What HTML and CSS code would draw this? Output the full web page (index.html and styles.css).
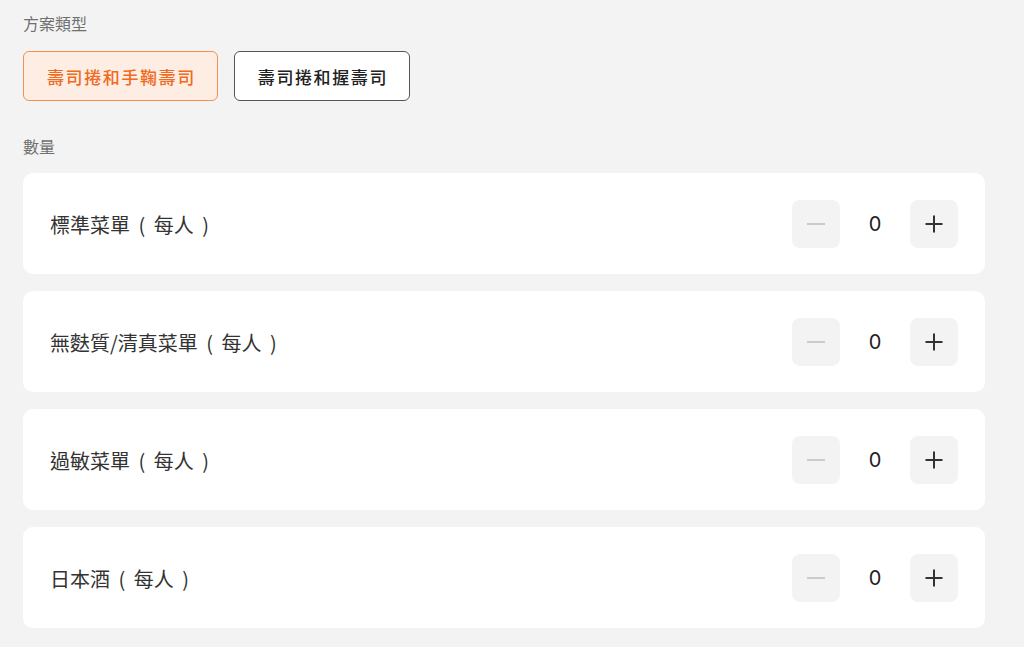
FILE: index.html
```html
<!DOCTYPE html>
<html>
  <head>
    <meta charset="utf-8">
    <title>方案</title>
    <link rel="stylesheet" href="styles.css">
  </head>
  <body>
    <section class="field">
      <p class="field-label">方案類型</p>
      <div class="plan-options">
        <button type="button" class="plan active">壽司捲和手鞠壽司</button>
        <button type="button" class="plan">壽司捲和握壽司</button>
      </div>
    </section>

    <section class="field">
      <p class="field-label qty-label">數量</p>
      <div class="qty-list">
        <div class="qty-row">
          <span class="qty-name">標準菜單 ( 每人 )</span>
          <div class="stepper">
            <button type="button" class="step minus" disabled>
              <svg viewBox="0 0 18 18" width="18" height="18"><path d="M0 9h18"/></svg>
            </button>
            <span class="count">0</span>
            <button type="button" class="step plus">
              <svg viewBox="0 0 18 18" width="18" height="18"><path d="M0.5 9h17M9 0.5v17"/></svg>
            </button>
          </div>
        </div>
        <div class="qty-row">
          <span class="qty-name">無麩質/清真菜單 ( 每人 )</span>
          <div class="stepper">
            <button type="button" class="step minus" disabled>
              <svg viewBox="0 0 18 18" width="18" height="18"><path d="M0 9h18"/></svg>
            </button>
            <span class="count">0</span>
            <button type="button" class="step plus">
              <svg viewBox="0 0 18 18" width="18" height="18"><path d="M0.5 9h17M9 0.5v17"/></svg>
            </button>
          </div>
        </div>
        <div class="qty-row">
          <span class="qty-name">過敏菜單 ( 每人 )</span>
          <div class="stepper">
            <button type="button" class="step minus" disabled>
              <svg viewBox="0 0 18 18" width="18" height="18"><path d="M0 9h18"/></svg>
            </button>
            <span class="count">0</span>
            <button type="button" class="step plus">
              <svg viewBox="0 0 18 18" width="18" height="18"><path d="M0.5 9h17M9 0.5v17"/></svg>
            </button>
          </div>
        </div>
        <div class="qty-row">
          <span class="qty-name">日本酒 ( 每人 )</span>
          <div class="stepper">
            <button type="button" class="step minus" disabled>
              <svg viewBox="0 0 18 18" width="18" height="18"><path d="M0 9h18"/></svg>
            </button>
            <span class="count">0</span>
            <button type="button" class="step plus">
              <svg viewBox="0 0 18 18" width="18" height="18"><path d="M0.5 9h17M9 0.5v17"/></svg>
            </button>
          </div>
        </div>
      </div>
    </section>
  </body>
</html>
```

FILE: styles.css
```css
* {
  margin: 0;
  padding: 0;
  box-sizing: border-box;
}

body {
  background-color: #f3f3f3;
  color: #333;
  font-family: "Noto Sans CJK TC", "Noto Sans", sans-serif;
  padding: 11px 39px 0 23px;
}

.field-label {
  color: #707070;
  font-size: 16px;
  line-height: 24px;
}

.plan-options {
  display: flex;
  gap: 16px;
  margin-top: 16px;
}

.plan {
  background-color: #fff;
  border: 1.5px solid #555;
  border-radius: 6px;
  color: #222;
  font-family: inherit;
  font-size: 17px;
  font-weight: 500;
  letter-spacing: 1.6px;
  height: 50px;
  padding: 0 21px 0 23px;
}

.plan.active {
  background-color: #fdede2;
  border-color: #f5904f;
  color: #f06a22;
}

.qty-label {
  margin-top: 33px;
}

.qty-list {
  display: flex;
  flex-direction: column;
  gap: 17px;
  margin-top: 15px;
}

.qty-row {
  background-color: #fff;
  border-radius: 10px;
  display: flex;
  align-items: center;
  justify-content: space-between;
  padding: 27px 27px 26px 27px;
}

.qty-name {
  font-size: 20px;
  color: #333;
  word-spacing: 4px;
}

.stepper {
  display: flex;
  align-items: center;
}

.step {
  background-color: #f3f3f3;
  border: none;
  border-radius: 8px;
  display: flex;
  align-items: center;
  justify-content: center;
  height: 48px;
  width: 48px;
}

.step svg {
  fill: none;
  stroke-width: 2;
}

.step.minus svg {
  stroke: #cbcbcb;
}

.step.plus svg {
  stroke: #333;
}

.count {
  font-family: Inter, "Liberation Sans", sans-serif;
  font-size: 20px;
  color: #222;
  text-align: center;
  width: 70px;
}
```
